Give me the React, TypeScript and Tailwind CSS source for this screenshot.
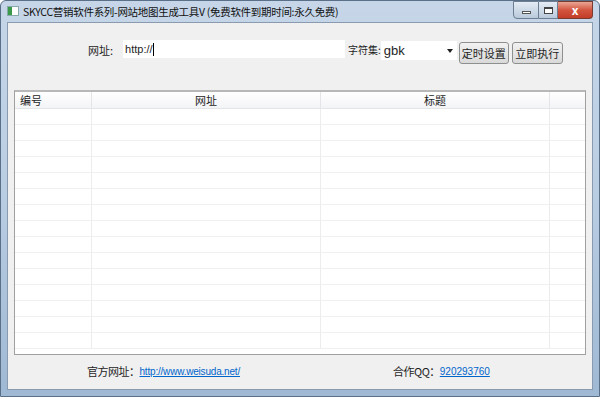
const rows = Array.from({ length: 15 });

export default function App() {
  return (
    <div
      className="w-[600px] h-[397px] overflow-hidden bg-gradient-to-b from-[#c6d6e8] via-[#b9cde2] to-[#9fb8d3] rounded-t-[6px] border border-[#5a6f88] flex flex-col text-[11px] text-[#1e1e1e]"
      style={{ fontFamily: '"Microsoft YaHei", "Noto Sans CJK SC", sans-serif' }}
    >
      {/* title bar */}
      <div className="h-[21px] flex items-start relative shrink-0">
        <div className="mt-[5px] ml-[6px] w-[12px] h-[10px] border border-[#8aa] bg-white flex">
          <div className="w-[4px] h-full bg-[#3a9a4a]" />
        </div>
        <div className="ml-[4px] mt-[3px] text-[10.5px] text-[#111] tracking-[-0.3px]">
          SKYCC营销软件系列-网站地图生成工具V (免费软件到期时间:永久免费)
        </div>
        <div className="absolute right-[6px] top-0 flex h-[18px]">
          <div className="w-[26px] h-[18px] border border-[#6d7e92] rounded-bl-[4px] bg-gradient-to-b from-[#e4ecf5] to-[#b9c9db] flex items-center justify-center">
            <div className="w-[9px] h-[3px] bg-white border border-[#555] mt-[4px]" />
          </div>
          <div className="w-[19px] h-[18px] border-y border-r border-[#6d7e92] bg-gradient-to-b from-[#e4ecf5] to-[#b9c9db] flex items-center justify-center">
            <div className="w-[9px] h-[7px] border border-t-[2px] border-[#444] bg-white" />
          </div>
          <div className="w-[35px] h-[18px] border-y border-r border-[#7a3b30] rounded-br-[4px] bg-gradient-to-b from-[#e8a595] via-[#d2553f] to-[#c33d28] flex items-center justify-center text-white font-bold text-[12px] leading-none">
            x
          </div>
        </div>
      </div>

      {/* client area */}
      <div className="flex-1 mx-[6px] mb-[6px] bg-[#f0f0f0] border border-[#8a9bb0] flex flex-col">
        {/* toolbar */}
        <div className="h-[67px] flex items-start pt-[17px] pl-[80px]">
          <span className="mt-[2px]">网址:</span>
          <div className="ml-[10px] w-[222px] h-[18px] bg-white flex items-center pl-[2px] text-[11px]" style={{ fontFamily: '"Liberation Sans", sans-serif' }}>
            http://<span className="w-px h-[13px] bg-black" />
          </div>
          <span className="ml-[3px] mt-[2px] text-[10px] whitespace-nowrap">字符集:</span>
          <div className="mt-[1px] w-[76px] h-[19px] bg-white flex items-center justify-between px-[3px] text-[13px]" style={{ fontFamily: '"Liberation Sans", sans-serif' }}>
            <span>gbk</span>
            <span className="w-0 h-0 border-x-[3px] border-x-transparent border-t-[4px] border-t-[#222] mr-[1px]" />
          </div>
          <button className="ml-[2px] mt-[2px] w-[50px] h-[22px] border border-[#8e8f8f] rounded-[3px] bg-gradient-to-b from-[#f2f2f2] to-[#d9d9d9] text-[11px]">
            定时设置
          </button>
          <button className="ml-[3px] mt-[2px] w-[51px] h-[22px] border border-[#8e8f8f] rounded-[3px] bg-gradient-to-b from-[#f2f2f2] to-[#d9d9d9] text-[11px]">
            立即执行
          </button>
        </div>

        {/* table */}
        <div className="mx-[6px] h-[265px] bg-white border border-[#a0a0a0] border-t-[2px] border-t-[#b8b8b8] overflow-hidden">
          <div className="h-[17px] grid grid-cols-[77px_229px_229px_1fr] bg-gradient-to-b from-white to-[#f3f4f6] border-b border-[#e3e5e8]">
            <div className="pl-[5px] border-r border-[#e3e5e8] leading-[17px]">编号</div>
            <div className="text-center border-r border-[#e3e5e8] leading-[17px]">网址</div>
            <div className="text-center border-r border-[#e3e5e8] leading-[17px]">标题</div>
            <div />
          </div>
          {rows.map((_, i) => (
            <div key={i} className="h-[16px] grid grid-cols-[77px_229px_229px_1fr] border-b border-[#f0f0f0]">
              <div className="border-r border-[#ececec]" />
              <div className="border-r border-[#ececec]" />
              <div className="border-r border-[#ececec]" />
              <div />
            </div>
          ))}
        </div>

        {/* footer */}
        <div className="flex-1 flex items-center text-[11px] pb-[2px]">
          <span className="ml-[79px] tracking-[-0.5px]">官方网址：</span>
          <span className="text-[#0066cc] underline text-[10px] tracking-[-0.2px]" style={{ fontFamily: '"Liberation Sans", sans-serif' }}>
            http://www.weisuda.net/
          </span>
          <span className="ml-[153px] tracking-[-0.5px]">合作QQ：</span>
          <span className="text-[#0066cc] underline text-[10px]" style={{ fontFamily: '"Liberation Sans", sans-serif' }}>
            920293760
          </span>
        </div>
      </div>
    </div>
  );
}
